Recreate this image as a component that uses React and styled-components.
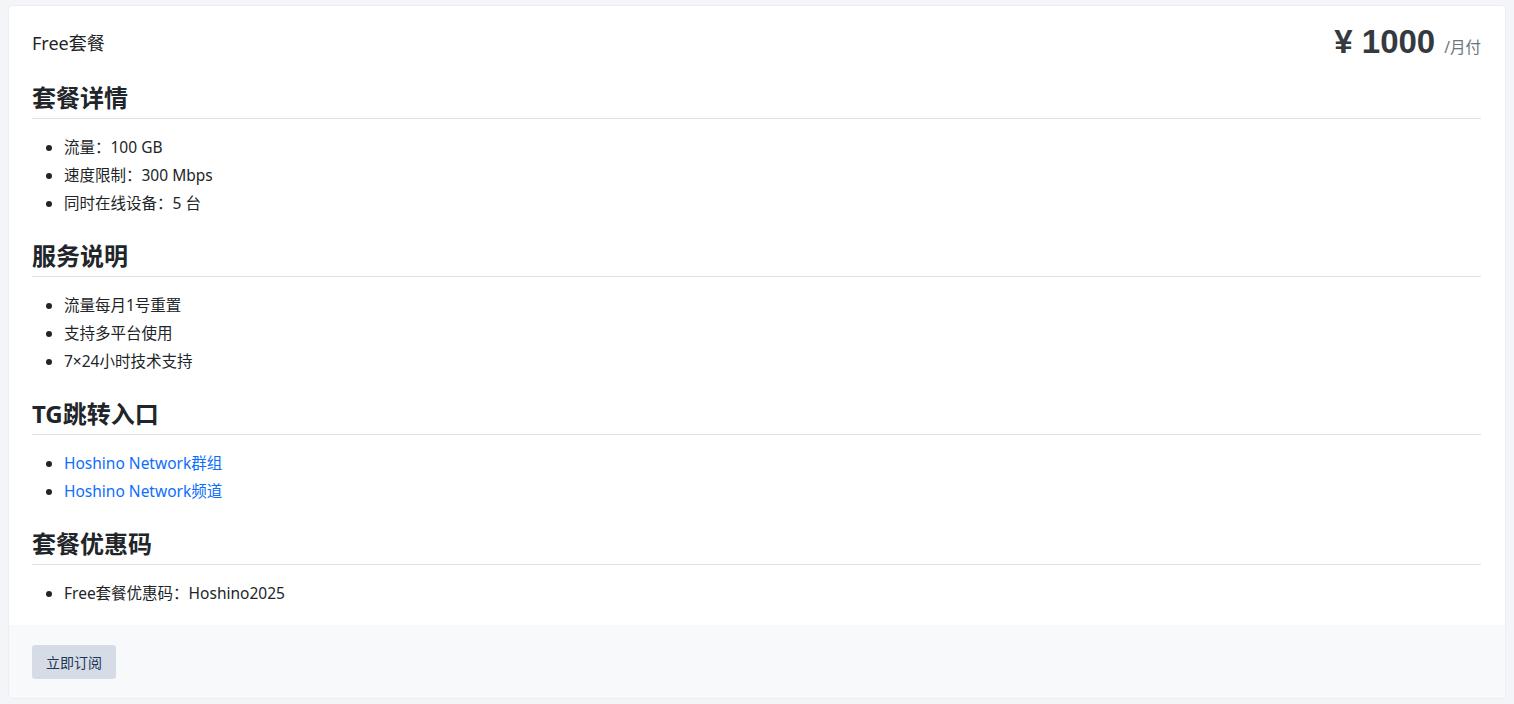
import React from "react";
import styled, { createGlobalStyle } from "styled-components";

const Global = createGlobalStyle`
  html, body { margin: 0; padding: 0; }
  body {
    background: #f4f5f9;
    font-family: "Noto Sans", "Noto Sans CJK SC", sans-serif;
    color: #212529;
  }
`;

const Page = styled.div`
  padding: 5px 8px 5px 8px;
`;

const Card = styled.div`
  background: #fff;
  border: 1px solid #eceef3;
  border-radius: 4px;
  overflow: hidden;
`;

const Body = styled.div`
  padding: 21px 24px 18px 23px;
`;

const Header = styled.div`
  display: flex;
  justify-content: space-between;
  align-items: center;
  height: 30px;
  margin-bottom: 26px;
`;

const Title = styled.div`
  font-size: 18px;
  color: #212529;
`;

const Price = styled.div`
  display: flex;
  align-items: baseline;
  gap: 9px;
`;

const Amount = styled.span`
  font-size: 33px;
  font-weight: 700;
  color: #343a40;
  font-family: "Liberation Sans", "Noto Sans CJK SC", sans-serif;
`;

const Period = styled.span`
  font-size: 15.5px;
  color: #6c757d;
`;

const Section = styled.section`
  & + & {
    margin-top: 24px;
  }
`;

const Heading = styled.h2`
  margin: 0;
  font-size: 24px;
  font-weight: 700;
  line-height: 29px;
  padding-bottom: 6px;
  border-bottom: 1px solid #dee2e6;
  color: #212529;
`;

const List = styled.ul`
  margin: 14px 0 0 0;
  padding-left: 32px;
`;

const Item = styled.li`
  font-size: 15.5px;
  line-height: 28px;
`;

const Link = styled.a`
  color: #0d6efd;
  text-decoration: none;
`;

const Footer = styled.div`
  background: #f8f9fb;
  padding: 20px 24px 19px 23px;
`;

const Button = styled.button`
  font-family: inherit;
  font-size: 14px;
  color: #1d3557;
  background: #d6dce6;
  border: none;
  border-radius: 3px;
  height: 34px;
  padding: 0 14px;
  cursor: pointer;
`;

const sections = [
  { title: "套餐详情", items: ["流量：100 GB", "速度限制：300 Mbps", "同时在线设备：5 台"] },
  { title: "服务说明", items: ["流量每月1号重置", "支持多平台使用", "7×24小时技术支持"] },
  { title: "TG跳转入口", links: ["Hoshino Network群组", "Hoshino Network频道"] },
  { title: "套餐优惠码", items: ["Free套餐优惠码：Hoshino2025"] },
];

export default function App() {
  return (
    <>
      <Global />
      <Page>
        <Card>
          <Body>
            <Header>
              <Title>Free套餐</Title>
              <Price>
                <Amount>¥ 1000</Amount>
                <Period>/月付</Period>
              </Price>
            </Header>
            {sections.map((s) => (
              <Section key={s.title}>
                <Heading>{s.title}</Heading>
                <List>
                  {s.items &&
                    s.items.map((t) => <Item key={t}>{t}</Item>)}
                  {s.links &&
                    s.links.map((t) => (
                      <Item key={t}>
                        <Link href="#">{t}</Link>
                      </Item>
                    ))}
                </List>
              </Section>
            ))}
          </Body>
          <Footer>
            <Button>立即订阅</Button>
          </Footer>
        </Card>
      </Page>
    </>
  );
}
